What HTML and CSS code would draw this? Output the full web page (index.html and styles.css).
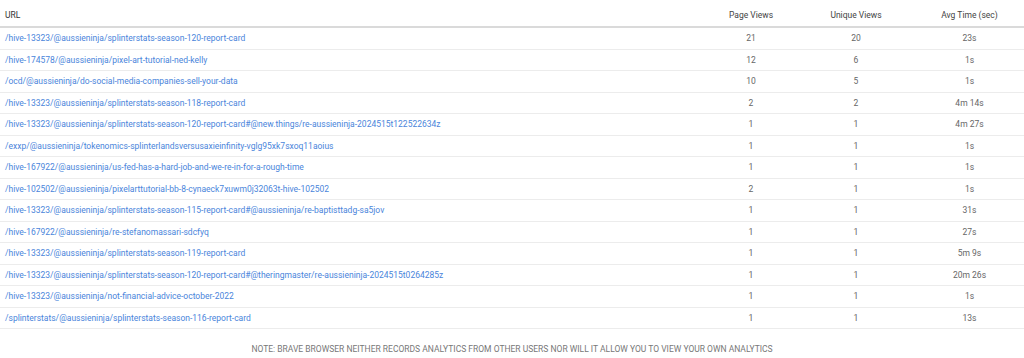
FILE: index.html
```html
<!DOCTYPE html>
<html>
<head>
<meta charset="utf-8">
<link rel="stylesheet" href="styles.css">
</head>
<body>
<div class="table">
  <div class="row head">
    <div class="c url">URL</div>
    <div class="c num">Page Views</div>
    <div class="c num">Unique Views</div>
    <div class="c num">Avg Time (sec)</div>
  </div>
  <div class="row"><div class="c url"><a>/hive-13323/@aussieninja/splinterstats-season-120-report-card</a></div><div class="c num">21</div><div class="c num">20</div><div class="c num">23s</div></div>
  <div class="row"><div class="c url"><a>/hive-174578/@aussieninja/pixel-art-tutorial-ned-kelly</a></div><div class="c num">12</div><div class="c num">6</div><div class="c num">1s</div></div>
  <div class="row"><div class="c url"><a>/ocd/@aussieninja/do-social-media-companies-sell-your-data</a></div><div class="c num">10</div><div class="c num">5</div><div class="c num">1s</div></div>
  <div class="row"><div class="c url"><a>/hive-13323/@aussieninja/splinterstats-season-118-report-card</a></div><div class="c num">2</div><div class="c num">2</div><div class="c num">4m 14s</div></div>
  <div class="row"><div class="c url"><a>/hive-13323/@aussieninja/splinterstats-season-120-report-card#@new.things/re-aussieninja-2024515t122522634z</a></div><div class="c num">1</div><div class="c num">1</div><div class="c num">4m 27s</div></div>
  <div class="row"><div class="c url"><a>/exxp/@aussieninja/tokenomics-splinterlandsversusaxieinfinity-vglg95xk7sxoq11aoius</a></div><div class="c num">1</div><div class="c num">1</div><div class="c num">1s</div></div>
  <div class="row"><div class="c url"><a>/hive-167922/@aussieninja/us-fed-has-a-hard-job-and-we-re-in-for-a-rough-time</a></div><div class="c num">1</div><div class="c num">1</div><div class="c num">1s</div></div>
  <div class="row"><div class="c url"><a>/hive-102502/@aussieninja/pixelarttutorial-bb-8-cynaeck7xuwm0j32063t-hive-102502</a></div><div class="c num">2</div><div class="c num">1</div><div class="c num">1s</div></div>
  <div class="row"><div class="c url"><a>/hive-13323/@aussieninja/splinterstats-season-115-report-card#@aussieninja/re-baptisttadg-sa5jov</a></div><div class="c num">1</div><div class="c num">1</div><div class="c num">31s</div></div>
  <div class="row"><div class="c url"><a>/hive-167922/@aussieninja/re-stefanomassari-sdcfyq</a></div><div class="c num">1</div><div class="c num">1</div><div class="c num">27s</div></div>
  <div class="row"><div class="c url"><a>/hive-13323/@aussieninja/splinterstats-season-119-report-card</a></div><div class="c num">1</div><div class="c num">1</div><div class="c num">5m 9s</div></div>
  <div class="row"><div class="c url"><a>/hive-13323/@aussieninja/splinterstats-season-120-report-card#@theringmaster/re-aussieninja-2024515t0264285z</a></div><div class="c num">1</div><div class="c num">1</div><div class="c num">20m 26s</div></div>
  <div class="row"><div class="c url"><a>/hive-13323/@aussieninja/not-financial-advice-october-2022</a></div><div class="c num">1</div><div class="c num">1</div><div class="c num">1s</div></div>
  <div class="row"><div class="c url"><a>/splinterstats/@aussieninja/splinterstats-season-116-report-card</a></div><div class="c num">1</div><div class="c num">1</div><div class="c num">13s</div></div>
</div>
<p class="note">NOTE: BRAVE BROWSER NEITHER RECORDS ANALYTICS FROM OTHER USERS NOR WILL IT ALLOW YOU TO VIEW YOUR OWN ANALYTICS</p>
</body>
</html>
```
FILE: styles.css
```css
html, body {
  margin: 0;
  padding: 0;
  background: #ffffff;
  font-family: Roboto, "Liberation Sans", sans-serif;
  font-size: 8.5px;
}
.table {
  width: 1024px;
}
.row {
  display: grid;
  grid-template-columns: 705px 92px 118px 109px;
  height: 21.5px;
  box-sizing: border-box;
  border-bottom: 1px solid #ececec;
  align-items: center;
}
.row.head {
  height: 28px;
  border-bottom: 2px solid #dadada;
  color: #333333;
  padding-top: 4px;
}
.c {
  white-space: nowrap;
  overflow: hidden;
}
.url {
  padding-left: 5px;
}
.num {
  text-align: center;
  color: #666666;
}
.head .num {
  color: #444444;
}
.url a {
  color: #4a85db;
  text-decoration: none;
}
.note {
  margin: 0;
  padding-top: 15px;
  text-align: center;
  color: #777777;
  font-size: 8.5px;
}
```
